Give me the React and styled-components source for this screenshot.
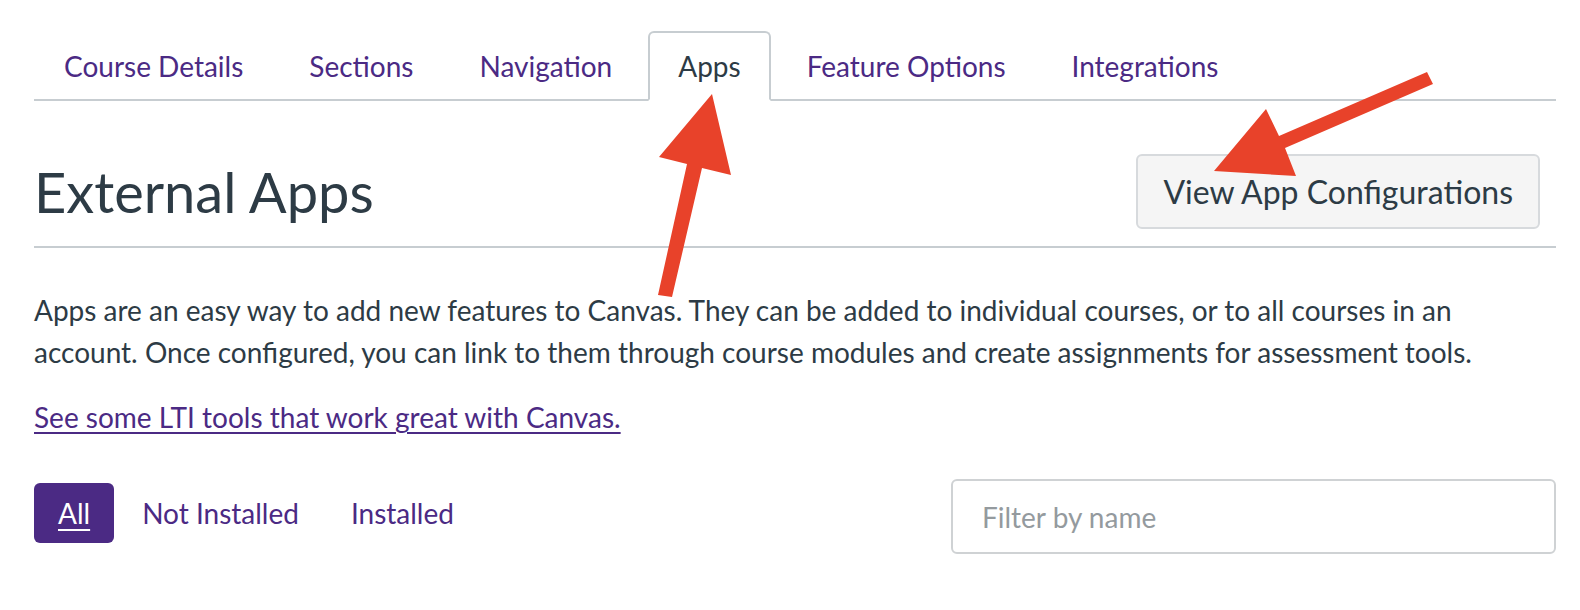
import React from 'react';
import styled, { createGlobalStyle } from 'styled-components';

const GlobalStyle = createGlobalStyle`
    html, body {
        margin: 0;
        padding: 0;
        background: #fff;
    }
    body {
        font-family: Lato, "Open Sans", "Liberation Sans", sans-serif;
        color: #2d3b45;
    }
`;

const tabs = ['Course Details', 'Sections', 'Navigation', 'Apps', 'Feature Options', 'Integrations'];
const filters = ['All', 'Not Installed', 'Installed'];

const App = () => {
    return (
        <Page>
            <GlobalStyle />
            <TabList>
                {tabs.map((t) => (
                    <Tab key={t} $active={t === 'Apps'}>{t}</Tab>
                ))}
            </TabList>

            <Header>
                <Title>External Apps</Title>
                <ConfigButton>View App Configurations</ConfigButton>
            </Header>

            <Intro>
                Apps are an easy way to add new features to Canvas. They can be added to individual courses, or to all courses in an
                account. Once configured, you can link to them through course modules and create assignments for assessment tools.
            </Intro>
            <Intro>
                <Link href="#">See some LTI tools that work great with Canvas.</Link>
            </Intro>

            <FilterRow>
                <FilterGroup>
                    {filters.map((f) => (
                        <FilterButton key={f} $active={f === 'All'}>{f}</FilterButton>
                    ))}
                </FilterGroup>
                <Search placeholder="Filter by name" />
            </FilterRow>

            {/* annotation arrows drawn over the screenshot */}
            <Arrows viewBox="0 0 1580 610" width="1580" height="610">
                <polygon points="712,94 731,175 702,168 672,297 658,295 687,164 659,157" />
                <polygon points="1214,171 1266,109 1279,136 1427,72 1433,84 1285,148 1296,176" />
            </Arrows>
        </Page>
    );
};

const Page = styled.div`
    position: relative;
    width: 1580px;
    height: 610px;
    box-sizing: border-box;
    padding: 31px 24px 0 34px;
    overflow: hidden;
`;

const TabList = styled.div`
    display: flex;
    gap: 6px;
    border-bottom: 2px solid #c7cdd1;
`;

const Tab = styled.div`
    box-sizing: border-box;
    height: 70px;
    margin-bottom: -2px;
    padding: 0 28px;
    display: flex;
    align-items: center;
    font-size: 28px;
    color: ${(p) => (p.$active ? '#2d3b45' : '#4b2a84')};
    background: ${(p) => (p.$active ? '#fff' : 'transparent')};
    border: 2px solid ${(p) => (p.$active ? '#c7cdd1' : 'transparent')};
    border-bottom-color: ${(p) => (p.$active ? '#fff' : 'transparent')};
    border-radius: 6px 6px 0 0;
`;

const Header = styled.div`
    display: flex;
    justify-content: space-between;
    align-items: center;
    margin-top: 53px;
    padding-bottom: 17px;
    border-bottom: 2px solid #c7cdd1;
`;

const Title = styled.h1`
    margin: 0;
    font-size: 56px;
    font-weight: 400;
    line-height: 1.2;
    color: #2d3b45;
`;

const ConfigButton = styled.button`
    box-sizing: border-box;
    height: 75px;
    margin-right: 16px;
    padding: 0 25px;
    font-family: inherit;
    font-size: 32px;
    color: #2d3b45;
    background: #f5f5f5;
    border: 2px solid #d7dadd;
    border-radius: 6px;
`;

const Intro = styled.p`
    margin: 41px 0 0;
    font-size: 28px;
    line-height: 42px;
    color: #2d3b45;

    & + & {
        margin-top: 23px;
    }
`;

const Link = styled.a`
    color: #4b2a84;
    text-decoration: underline;
    text-underline-offset: 4px;
    text-decoration-thickness: 2px;
`;

const FilterRow = styled.div`
    display: flex;
    justify-content: space-between;
    align-items: flex-start;
    margin-top: 41px;
`;

const FilterGroup = styled.div`
    display: flex;
    gap: 4px;
    margin-top: 4px;
`;

const FilterButton = styled.button`
    box-sizing: border-box;
    height: 60px;
    padding: 0 24px;
    font-family: inherit;
    font-size: 28px;
    border: none;
    border-radius: 6px;
    color: ${(p) => (p.$active ? '#fff' : '#4b2a84')};
    background: ${(p) => (p.$active ? '#4b2a84' : 'transparent')};
    text-decoration: ${(p) => (p.$active ? 'underline' : 'none')};
    text-underline-offset: 5px;
    text-decoration-thickness: 2px;
`;

const Search = styled.input`
    box-sizing: border-box;
    width: 605px;
    height: 75px;
    padding: 0 29px;
    font-family: inherit;
    font-size: 28px;
    color: #2d3b45;
    border: 2px solid #cfd2d4;
    border-radius: 6px;
    outline: none;

    &::placeholder {
        color: #949a9e;
    }
`;

const Arrows = styled.svg`
    position: absolute;
    top: 0;
    left: 0;
    pointer-events: none;

    polygon {
        fill: #e8422a;
    }
`;

export default App;
